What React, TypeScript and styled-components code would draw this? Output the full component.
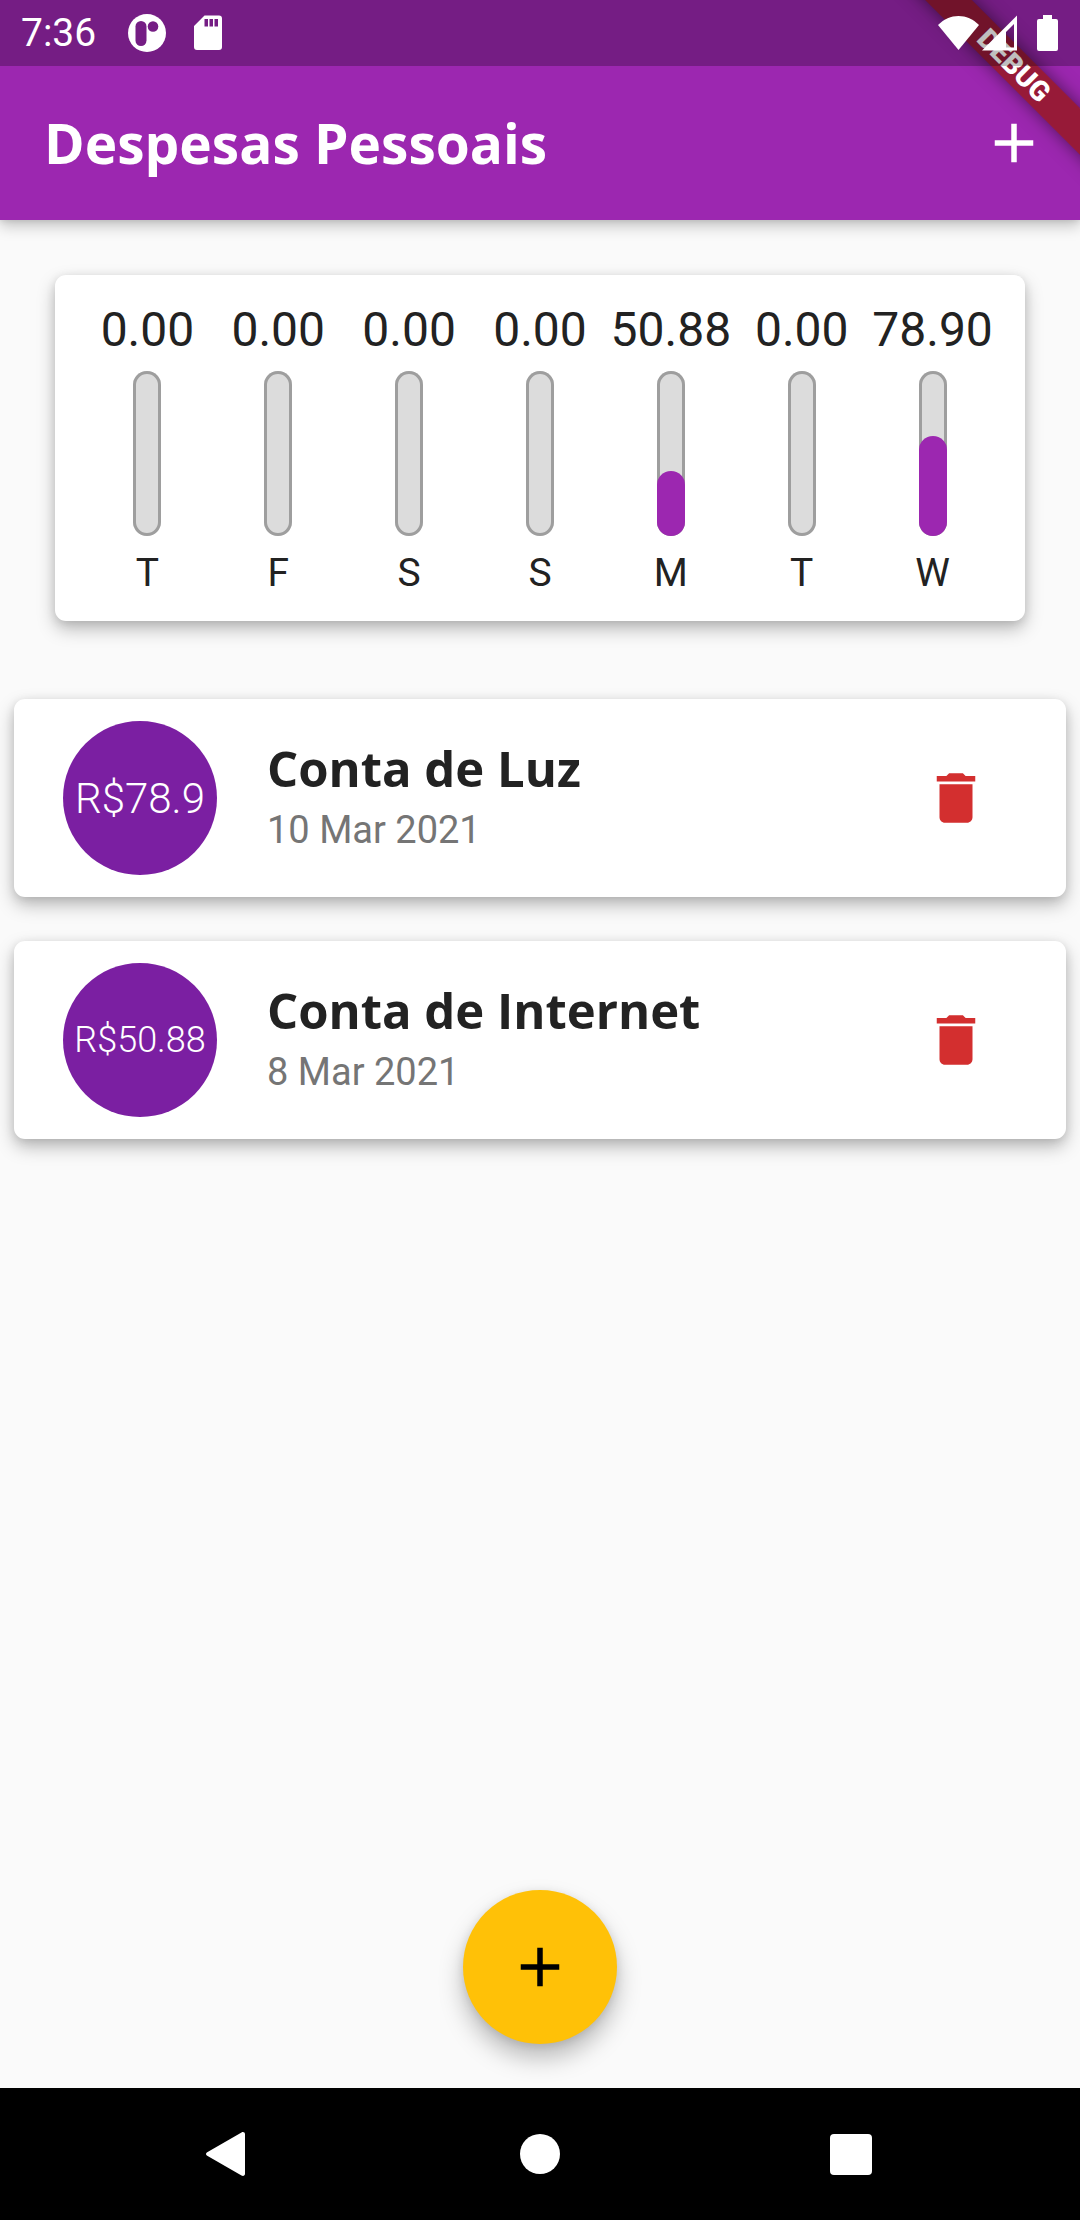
import React from "react";
import styled, { createGlobalStyle } from "styled-components";

const PRIMARY = "#9c27b0";

const GlobalStyle = createGlobalStyle`
  *, *::before, *::after { box-sizing: border-box; }
  body { margin: 0; background: #fafafa; font-family: Roboto, sans-serif; color: #222222; }
  button { margin: 0; padding: 0; border: 0; background: none; color: inherit; font: inherit; cursor: pointer; }
  h1, h2, p, ul { margin: 0; padding: 0; }
  ul { list-style: none; }
  svg { display: block; flex: none; }
`;

const Screen = styled.div`
  position: relative;
  display: flex;
  flex-direction: column;
  min-height: 100vh;
  overflow: hidden;
`;

const Header = styled.header`
  background: ${PRIMARY};
  color: #ffffff;
  box-shadow: 0 6px 14px rgba(0, 0, 0, 0.22), 0 1px 6px rgba(0, 0, 0, 0.1);
`;

const StatusBar = styled.div`
  position: relative;
  z-index: 2;
  display: flex;
  align-items: center;
  justify-content: space-between;
  height: 66px;
  padding: 0 22px 0 21px;
  background: rgba(0, 0, 0, 0.25);
`;

const StatusGroup = styled.div<{ $gap: number }>`
  display: flex;
  align-items: center;
  gap: ${(p) => p.$gap}px;
`;

const Clock = styled.time`
  margin-right: 4px;
  font-size: 39px;
  line-height: 48px;
`;

const Toolbar = styled.div`
  display: flex;
  align-items: center;
  justify-content: space-between;
  height: 154px;
  padding-left: 44px;
`;

const AppTitle = styled.h1`
  font: 700 55px/76px "Open Sans", sans-serif;
`;

const IconButton = styled.button`
  display: flex;
  align-items: center;
  justify-content: center;
  flex: none;
  width: 132px;
  height: 132px;
`;

const DebugBanner = styled.div`
  position: absolute;
  z-index: 1;
  top: 49px;
  right: -84px;
  width: 300px;
  height: 33px;
  transform: rotate(45deg);
  background: rgba(151, 25, 35, 0.85);
  box-shadow: 0 0 17px rgba(0, 0, 0, 0.5);
  color: #ffffff;
  font-size: 28px;
  font-weight: 900;
  line-height: 33px;
  text-align: center;
  pointer-events: none;
`;

const Content = styled.main`
  display: flex;
  flex: 1;
  flex-direction: column;
`;

const Card = styled.div`
  border-radius: 11px;
  background: #ffffff;
  box-shadow: 0 8px 18px rgba(0, 0, 0, 0.26), 0 2px 10px rgba(0, 0, 0, 0.1);
`;

const ChartCard = styled(Card)`
  display: grid;
  grid-template-columns: repeat(7, minmax(0, 1fr));
  margin: 55px 55px 78px;
  padding: 27px 27px 24px;
`;

const Day = styled.div`
  display: flex;
  flex-direction: column;
  align-items: center;
  gap: 13px;
`;

const DayValue = styled.span`
  font-size: 48px;
  line-height: 56px;
  white-space: nowrap;
`;

const Track = styled.div`
  display: flex;
  flex-direction: column;
  justify-content: flex-end;
  width: 28px;
  height: 165px;
  border-radius: 14px;
  background: #dcdcdc;
  box-shadow: inset 0 0 0 3px #9e9e9e;
`;

const Fill = styled.div`
  border-radius: 14px;
  background: ${PRIMARY};
`;

const DayLabel = styled.span`
  font-size: 39px;
  line-height: 48px;
`;

const ExpenseList = styled.ul`
  display: flex;
  flex-direction: column;
  gap: 44px;
  padding: 0 14px;
`;

const ExpenseCard = styled(Card)`
  display: flex;
  align-items: center;
  padding: 22px 44px 22px 49px;
`;

const Amount = styled.div<{ $size: number }>`
  display: flex;
  align-items: center;
  justify-content: center;
  flex: none;
  width: 154px;
  height: 154px;
  margin-right: 50px;
  border-radius: 50%;
  background: #7b1fa2;
  color: #ffffff;
  font-size: ${(p) => p.$size}px;
  font-weight: 300;
  white-space: nowrap;
`;

const Details = styled.div`
  flex: 1;
  min-width: 0;
`;

const ExpenseName = styled.h2`
  font: 700 49px/64px "Open Sans", sans-serif;
`;

const ExpenseDate = styled.p`
  color: #757575;
  font-size: 38px;
  line-height: 60px;
`;

const Fab = styled.button`
  display: flex;
  align-items: center;
  justify-content: center;
  align-self: center;
  width: 154px;
  height: 154px;
  margin: auto 0 44px;
  border-radius: 50%;
  background: #ffc107;
  color: #000000;
  box-shadow: 0 14px 24px rgba(0, 0, 0, 0.26), 0 2px 10px rgba(0, 0, 0, 0.1);
`;

const NavBar = styled.nav`
  position: relative;
  display: grid;
  grid-template-columns: repeat(3, 1fr);
  height: 132px;
  padding: 0 72px;
  background: #000000;
  color: #ffffff;
`;

const NavButton = styled.button`
  display: flex;
  align-items: center;
  justify-content: center;
`;

const AddIcon = () => (
  <svg width="66" height="66" viewBox="0 0 24 24" fill="currentColor" aria-hidden="true">
    <path d="M19 13h-6v6h-2v-6H5v-2h6V5h2v6h6v2z" />
  </svg>
);

const TrashIcon = () => (
  <svg width="66" height="66" viewBox="0 0 24 24" fill="#d32f2f" aria-hidden="true">
    <path d="M6 19c0 1.1.9 2 2 2h8c1.1 0 2-.9 2-2V7H6v12zM19 4h-3.500l-1-1h-5l-1 1H5v2h14V4z" />
  </svg>
);

const AppNotificationIcon = () => (
  <svg width="40" height="40" viewBox="0 0 40 40" aria-hidden="true">
    <circle cx="20" cy="20" r="19" fill="#ffffff" />
    <rect x="8.500" y="8" width="11" height="25" rx="5.500" fill="#751d84" />
    <circle cx="26" cy="13.500" r="5.300" fill="#751d84" />
  </svg>
);

const SdCardIcon = () => (
  <svg width="28" height="36" viewBox="0 0 28 36" aria-hidden="true">
    <path d="M10.500 0.500H25a3 3 0 0 1 3 3V32a3 3 0 0 1-3 3H3a3 3 0 0 1-3-3V11z" fill="#ffffff" />
    <path d="M10.500 4h3.500v7.500h-3.500zM15.500 4H19v7.500h-3.500zM20.500 4H24v7.500h-3.500z" fill="#751d84" />
  </svg>
);

const WifiIcon = () => (
  <svg width="41" height="36" viewBox="0 0 41 36" fill="#ffffff" aria-hidden="true">
    <path d="M20.500 35 0 10C6 4 13 1 20.500 1S35 4 41 10z" />
  </svg>
);

const SignalIcon = () => (
  <svg width="35" height="36" viewBox="0 0 35 36" fill="#ffffff" aria-hidden="true">
    <path fillRule="evenodd" d="M0 35.500 35 0.500v35zM24 32.500h8V9l-8 8z" />
  </svg>
);

const BatteryIcon = () => (
  <svg width="21" height="36" viewBox="0 0 21 36" fill="#ffffff" aria-hidden="true">
    <path d="M6 0h9v4h4a2 2 0 0 1 2 2v28a2 2 0 0 1-2 2H2a2 2 0 0 1-2-2V6a2 2 0 0 1 2-2h4z" />
  </svg>
);

const BackIcon = () => (
  <svg width="44" height="46" viewBox="0 0 44 46" fill="currentColor" aria-hidden="true">
    <path d="M1.200 21.200 35.500 1.400c1.800-1 3.500 0 3.500 1.800v39.600c0 1.800-1.700 2.800-3.500 1.800L1.200 24.800c-1.600-1-1.600-2.700 0-3.600z" />
  </svg>
);

const HomeIcon = () => (
  <svg width="42" height="42" viewBox="0 0 42 42" fill="currentColor" aria-hidden="true">
    <circle cx="21" cy="21" r="20" />
  </svg>
);

const RecentsIcon = () => (
  <svg width="44" height="42" viewBox="0 0 44 42" fill="currentColor" aria-hidden="true">
    <rect x="0" y="1" width="42" height="41" rx="4" />
  </svg>
);

const week = [
  { label: "T", value: 0 },
  { label: "F", value: 0 },
  { label: "S", value: 0 },
  { label: "S", value: 0 },
  { label: "M", value: 50.88 },
  { label: "T", value: 0 },
  { label: "W", value: 78.9 },
];

const weekTotal = week.reduce((sum, day) => sum + day.value, 0);

const expenses = [
  { name: "Conta de Luz", date: "10 Mar 2021", value: 78.9, size: 42 },
  { name: "Conta de Internet", date: "8 Mar 2021", value: 50.88, size: 36 },
];

export default function App() {
  return (
    <>
      <GlobalStyle />
      <Screen>
        <Header>
          <StatusBar>
            <StatusGroup $gap={27}>
              <Clock>7:36</Clock>
              <AppNotificationIcon />
              <SdCardIcon />
            </StatusGroup>
            <StatusGroup $gap={3}>
              <WifiIcon />
              <StatusGroup $gap={20}>
                <SignalIcon />
                <BatteryIcon />
              </StatusGroup>
            </StatusGroup>
          </StatusBar>
          <Toolbar>
            <AppTitle>Despesas Pessoais</AppTitle>
            <IconButton type="button" aria-label="Adicionar despesa">
              <AddIcon />
            </IconButton>
          </Toolbar>
        </Header>
        <DebugBanner>DEBUG</DebugBanner>

        <Content>
          <ChartCard>
            {week.map((day, i) => (
              <Day key={i}>
                <DayValue>{day.value.toFixed(2)}</DayValue>
                <Track>
                  <Fill style={{ height: `${(day.value / weekTotal) * 100}%` }} />
                </Track>
                <DayLabel>{day.label}</DayLabel>
              </Day>
            ))}
          </ChartCard>

          <ExpenseList>
            {expenses.map((item) => (
              <ExpenseCard as="li" key={item.name}>
                <Amount $size={item.size}>{`R$${item.value}`}</Amount>
                <Details>
                  <ExpenseName>{item.name}</ExpenseName>
                  <ExpenseDate>{item.date}</ExpenseDate>
                </Details>
                <IconButton type="button" aria-label={`Excluir ${item.name}`}>
                  <TrashIcon />
                </IconButton>
              </ExpenseCard>
            ))}
          </ExpenseList>

          <Fab type="button" aria-label="Nova despesa">
            <AddIcon />
          </Fab>
        </Content>

        <NavBar aria-label="Sistema">
          <NavButton type="button" aria-label="Voltar">
            <BackIcon />
          </NavButton>
          <NavButton type="button" aria-label="Início">
            <HomeIcon />
          </NavButton>
          <NavButton type="button" aria-label="Recentes">
            <RecentsIcon />
          </NavButton>
        </NavBar>
      </Screen>
    </>
  );
}
